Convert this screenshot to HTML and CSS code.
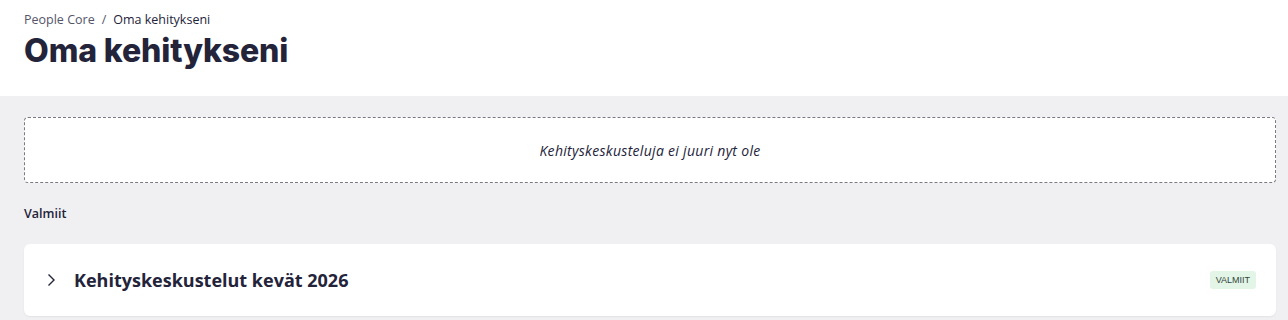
FILE: index.html
```html
<!DOCTYPE html>
<html lang="fi">
<head>
<meta charset="utf-8">
<link rel="stylesheet" href="styles.css">
<title>Oma kehitykseni</title>
</head>
<body>
<header class="page-header">
  <nav class="breadcrumb"><span class="crumb-parent">People Core</span><span class="crumb-sep">/</span><span class="crumb-current">Oma kehitykseni</span></nav>
  <h1 class="page-title">Oma kehitykseni</h1>
</header>
<main class="content">
  <div class="empty-box">Kehityskeskusteluja ei juuri nyt ole</div>
  <h2 class="section-label">Valmiit</h2>
  <div class="card">
    <svg class="chevron" width="10" height="14" viewBox="0 0 10 14"><path d="M2.5 1.5 L8 7 L2.5 12.5" fill="none" stroke="#23233a" stroke-width="1.4"/></svg>
    <span class="card-title">Kehityskeskustelut kevät 2026</span>
    <span class="badge">VALMIIT</span>
  </div>
</main>
</body>
</html>
```
FILE: styles.css
```css
* { box-sizing: border-box; }
html, body { margin: 0; padding: 0; }
body {
  background: #f0f0f2;
  color: #23233a;
  font-family: "Open Sans", sans-serif;
  height: 320px;
  overflow: hidden;
}
.page-header {
  background: #ffffff;
  height: 96px;
  padding: 11px 24px 0;
}
.breadcrumb {
  font-size: 12.5px;
  line-height: 18px;
  display: flex;
  gap: 7px;
}
.crumb-parent { color: #55556a; }
.crumb-current { color: #23233a; }
.crumb-sep { color: #55556a; }
.page-title {
  margin: 2px 0 0;
  font-family: "Inter", sans-serif;
  font-weight: 800;
  font-size: 32px;
  line-height: 40px;
  letter-spacing: -0.1px;
  color: #23233a;
}
.content {
  padding: 21px 12px 0 24px;
}
.empty-box {
  height: 66px;
  background: #ffffff;
  border: 1px dashed #7a7a85;
  border-radius: 4px;
  display: flex;
  align-items: center;
  justify-content: center;
  font-style: italic;
  font-size: 14px;
  letter-spacing: 0.3px;
  color: #23233a;
}
.section-label {
  margin: 22px 0 0;
  font-size: 12.5px;
  font-weight: 600;
  line-height: 18px;
}
.card {
  margin-top: 21px;
  height: 72px;
  background: #ffffff;
  border-radius: 6px;
  box-shadow: 0 1px 2px rgba(0,0,0,0.06);
  display: flex;
  align-items: center;
  padding: 0 20px 0 22px;
}
.chevron { flex: none; margin-right: 18px; }
.card-title {
  font-size: 18px;
  font-weight: 700;
  flex: 1;
}
.badge {
  background: #e2f5e7;
  color: #34443c;
  font-family: "Liberation Sans", Arial, sans-serif;
  font-size: 9px;
  line-height: 18px;
  padding: 0 6px;
  border-radius: 3px;
}
```
